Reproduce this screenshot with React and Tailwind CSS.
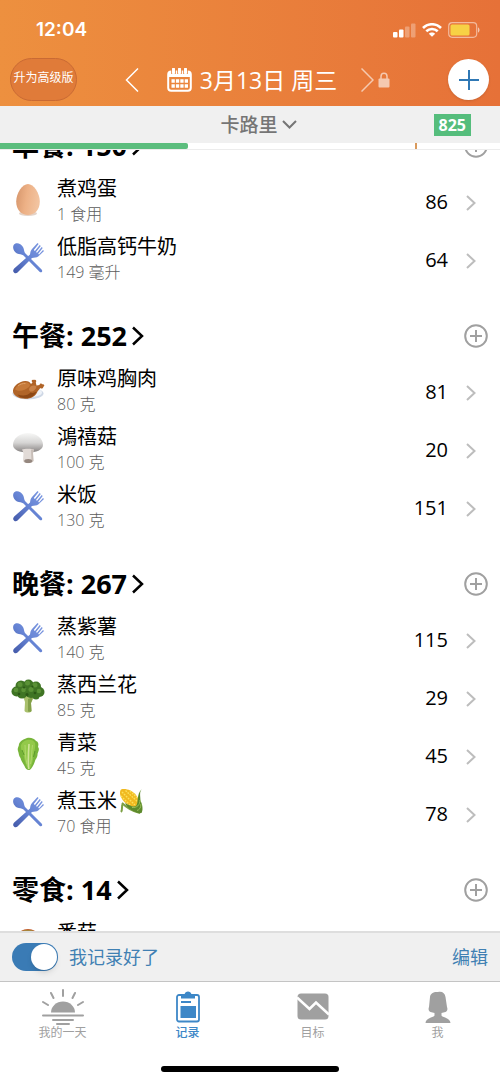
import { useLayoutEffect, useRef, useState } from 'react'

const DAY = {
  date: '3月13日 周三',
  remaining: 825,
  eaten: 37.6,
  marker: 83,
}

const MEALS = [
  {
    name: '早餐',
    total: 150,
    foods: [
      { name: '煮鸡蛋', amount: '1 食用', kcal: 86, icon: 'egg' },
      { name: '低脂高钙牛奶', amount: '149 毫升', kcal: 64, icon: 'cutlery' },
    ],
  },
  {
    name: '午餐',
    total: 252,
    foods: [
      { name: '原味鸡胸肉', amount: '80 克', kcal: 81, icon: 'chicken' },
      { name: '鴻禧菇', amount: '100 克', kcal: 20, icon: 'mushroom' },
      { name: '米饭', amount: '130 克', kcal: 151, icon: 'cutlery' },
    ],
  },
  {
    name: '晚餐',
    total: 267,
    foods: [
      { name: '蒸紫薯', amount: '140 克', kcal: 115, icon: 'cutlery' },
      { name: '蒸西兰花', amount: '85 克', kcal: 29, icon: 'broccoli' },
      { name: '青菜', amount: '45 克', kcal: 45, icon: 'lettuce' },
      { name: '煮玉米', amount: '70 食用', kcal: 78, icon: 'cutlery', corn: true },
    ],
  },
  {
    name: '零食',
    total: 14,
    foods: [{ name: '番茄', icon: 'tomato' }],
  },
]

const Egg = () => (
  <svg viewBox="0 0 32 32" className="size-8">
    <defs>
      <linearGradient id="egg" x1="0" x2="1" y1="0" y2="0.2">
        <stop offset="0" stopColor="#d5946a" />
        <stop offset="0.5" stopColor="#edb186" />
        <stop offset="1" stopColor="#f2c39f" />
      </linearGradient>
    </defs>
    <ellipse cx="16" cy="29.500" rx="9" ry="2.500" fill="#e4d3c8" />
    <path d="M16 0C21.500 0 27.800 9 27.800 17.500C27.800 26 22.500 31 16 31S4.200 26 4.200 17.500C4.200 9 10.500 0 16 0Z" fill="url(#egg)" />
  </svg>
)

const Cutlery = () => (
  <svg viewBox="0 0 32 32" className="size-8">
    <defs>
      <linearGradient id="steel" x1="0" x2="1" y1="1" y2="0">
        <stop offset="0" stopColor="#4258a8" />
        <stop offset="0.5" stopColor="#6684d4" />
        <stop offset="1" stopColor="#7d99e2" />
      </linearGradient>
    </defs>
    <g fill="url(#steel)">
      <path d="M2 2.500C4.500 0 9 1.500 11 5C12.300 7.500 12 9.500 13 11L29.800 27.800C31 29.500 29.500 31 27.800 30L11.500 13.500C9.500 12 7.500 12.500 5 11.500C1.500 9.500 0 5 2 2.500Z" />
      <path d="M2.200 30.700C.6 29.500 1 28 2.200 26.600L18 12.500C18.500 10.500 18.200 9 20 7L25.500 1L26.600 2L21.800 8L22.900 8.900L27.700 3L28.800 3.900L24 9.900L25 10.800L29.700 5L30.700 6L26.200 11.800L27 12.500L31 8L32 8.900L26.500 14.300C24.500 16 22 15.300 20 16L5.500 30.500C4.500 31.500 3 31.500 2.200 30.700Z" />
    </g>
  </svg>
)

const Chicken = () => (
  <svg viewBox="0 0 34 32" className="h-8 w-[34px]">
    <ellipse cx="17" cy="19.500" rx="15.500" ry="6" fill="#cfd8e6" />
    <ellipse cx="16.500" cy="18.500" rx="14.500" ry="5" fill="#eef2f8" />
    <path d="M20 10L21.500 8.500C19.500 6.500 21.500 5 23 6C24.800 5 26 7 24.800 8.500L25.500 11.500L28.500 11C29 9 30.800 9.200 31.200 10.200C33.500 9.800 34 12 32.300 12.800C32.300 14.800 30.300 15 29.300 14L26.500 17.500C25 22 20 25 14 24.800C7 24.800 1.500 21 2 16.500C2.500 11.500 8.500 7.500 14 7C17 6.800 19 8 20 10Z" fill="#b06428" />
    <path d="M4 15.500C6 10.500 11 8 15 8.200C18.500 8.600 20 11 18 13C14 16.500 8 18 4 15.500Z" fill="#c67a3a" />
    <path d="M6.500 20.500C12 22.500 17 21.500 19.500 18.500C21.500 19.500 24 18.500 25.500 17.500C23.500 22.500 18.500 24.500 14 24.200C10.500 24 8 22.800 6.500 20.500Z" fill="#8d4815" />
    <path d="M18 15.500C18.500 12 22.500 10.500 25.500 12.500C25 15.500 22 18 19 17.500Z" fill="#c98248" />
    <path d="M7 12C9 10 12 9.300 14.500 9.600" stroke="#dfa066" fill="none" />
  </svg>
)

const Mushroom = () => (
  <svg viewBox="0 0 32 32" className="size-8">
    <defs>
      <linearGradient id="cap" x1="0" x2="0" y1="0" y2="1">
        <stop offset="0" stopColor="#f8f8f7" />
        <stop offset="0.5" stopColor="#d6d5d4" />
        <stop offset="1" stopColor="#858180" />
      </linearGradient>
    </defs>
    <path d="M1 13C1 6 8 1 16 1S31 6 31 13C31 18 24 20.500 16 20.500S1 18 1 13Z" fill="url(#cap)" />
    <path d="M10 17.500C12 16.500 20 16.500 22 17.500L21 21L21.500 29C20 32 12 32 11 29L11.500 21Z" fill="#e2dbd7" />
    <path d="M19 17.500H22L21 21L21.500 29L19.500 30.500Z" fill="#c8beb8" />
    <ellipse cx="16.200" cy="29" rx="4" ry="2" fill="#95877f" />
  </svg>
)

const Broccoli = () => (
  <svg viewBox="0 0 34 34" className="size-[34px]">
    <path d="M7 16L12 17L14 23L13.500 32C15 34 19.500 34 20.500 32L20 24L23 18L28 16Z" fill="#a9c06c" />
    <path d="M17 20L17 32.500C19 33 20 33 20.500 32L20 24L22 18Z" fill="#83a04a" />
    <g fill="#3f7424">
      <circle cx="5.500" cy="12.500" r="5" />
      <circle cx="10" cy="7" r="5.500" />
      <circle cx="17.500" cy="5.500" r="5" />
      <circle cx="25" cy="7.500" r="5" />
      <circle cx="28.500" cy="13" r="5" />
      <circle cx="20" cy="13" r="6" />
      <circle cx="11" cy="14" r="5.500" />
      <circle cx="25" cy="17" r="3.500" />
    </g>
    <g fill="#5a9136">
      <circle cx="9" cy="5.500" r="2.500" />
      <circle cx="16.500" cy="4" r="2.500" />
      <circle cx="24" cy="6" r="2.500" />
      <circle cx="5" cy="11" r="2.300" />
      <circle cx="12.500" cy="11" r="2.300" />
      <circle cx="20" cy="10.500" r="2.500" />
      <circle cx="28" cy="12" r="2.300" />
    </g>
    <g fill="#2b5716">
      <circle cx="13" cy="8.500" r="1" />
      <circle cx="8" cy="15" r="1.300" />
      <circle cx="16" cy="15.500" r="1.500" />
      <circle cx="24" cy="14" r="1.300" />
      <circle cx="21.500" cy="7.500" r="1" />
    </g>
  </svg>
)

const Lettuce = () => (
  <svg viewBox="0 0 32 34" className="h-[34px] w-8">
    <path d="M15 1C18 0 23 1.500 24 4C27 5 26.500 8 26 10C28 12 26 15 25.500 17C26 20 23.500 22 23 24C22 27 20 32 17.500 33C15.500 33.500 13.500 32 12.500 29C11 26 9 24 8.500 21C6.500 19 7 16 6 14C5 11 7 9.500 7 7C8 4 12 2 15 1Z" fill="#78b53a" />
    <path d="M15 3C18 2 22 3 23 6C24 10 22 14 21.500 19C21 25 19 30 17.500 32C14 30 13 25 12 20C11 15 8 12 9 8C10 5 13 3.500 15 3Z" fill="#93c94a" />
    <path d="M17 7C16.500 14 16 24 16.700 32" stroke="#cfe597" strokeWidth="1.600" fill="none" />
    <path d="M13 8C13.500 14 13 20 15 27M20.500 8C19.500 14 20 20 18.500 27" stroke="#b3d970" strokeWidth="0.900" fill="none" />
    <path d="M10 13L12 18M23 14L21.500 20" stroke="#5c9a2c" strokeWidth="1" fill="none" />
  </svg>
)

const Tomato = () => (
  <svg viewBox="0 0 32 32" className="size-8">
    <ellipse cx="16" cy="16" rx="14" ry="15" fill="#c9572c" />
    <path d="M5 7C8 0 24 0 27 7C22 9 10 9 5 7Z" fill="#a8853c" />
  </svg>
)

const Corn = () => (
  <svg viewBox="0 0 24 26" className="ml-0.5 h-[26px] w-6">
    <path d="M4 15C2 18 4 22 2 24M3 15C8 20 12 23 21 25" stroke="#7da044" strokeWidth="2" fill="none" />
    <path d="M2 1.500C6 0 13 2 17 7C20 11 20.500 16 18 18.500C14 20 8 17 4.500 13C1 9 0 4 2 1.500Z" fill="#f0b91f" />
    <path d="M3 4L16 17M6.500 2.500L19 14M2 8L12 18M11 3L19.500 11" stroke="#fbe05a" strokeWidth="1.400" strokeDasharray="1.800 1" fill="none" />
    <path d="M23 1C20 4 21.500 8 21.500 13C24 17 24 23 22.500 25C18 26 8 21 6 15C10 17 14 19.500 17 18C20 15 17 6 23 1Z" fill="#5d8a2c" />
    <path d="M21 12C21 17 18 20 13 19.500M22 16C22 20 20 22 18 22.500" stroke="#9cc25a" fill="none" />
  </svg>
)

const FOOD_ICONS = {
  egg: Egg,
  cutlery: Cutlery,
  chicken: Chicken,
  mushroom: Mushroom,
  broccoli: Broccoli,
  lettuce: Lettuce,
  tomato: Tomato,
}

const StatusBar = () => (
  <div className="flex items-center justify-between pt-4 pr-5 pl-9">
    <span className="font-['Inter',sans-serif] text-[19px] leading-7 font-semibold">12:04</span>
    <div className="flex items-center gap-1.5">
      <svg viewBox="0 0 23 15" className="h-[15px] w-[23px]" fill="#fff">
        <rect x="0" y="9" width="4.500" height="5.500" rx="1" />
        <rect x="6" y="6.500" width="4.500" height="8" rx="1" />
        <rect x="12" y="3.500" width="4.500" height="11" rx="1" opacity="0.3" />
        <rect x="18" y="0.500" width="4.500" height="14" rx="1" opacity="0.3" />
      </svg>
      <svg viewBox="0 0 20 14" className="h-3.5 w-5" fill="none" stroke="#fff" strokeWidth="2.600">
        <path d="M1 5C6 0 14 0 19 5" />
        <path d="M4.300 8.300C7.500 5.200 12.500 5.200 15.700 8.300" />
        <path d="M10 13.800L6.800 10.700C8.500 9 11.500 9 13.200 10.700Z" fill="#fff" stroke="none" />
      </svg>
      <svg viewBox="0 0 32 16" className="h-4 w-8">
        <rect x="0.700" y="0.700" width="28" height="14.600" rx="3.500" fill="none" stroke="#fff" strokeWidth="1.200" opacity="0.5" />
        <rect x="2.500" y="2.500" width="19" height="11" rx="1.500" fill="#f7d145" />
        <path d="M30 5.500C32 6 32 10 30 10.500Z" fill="#fff" opacity="0.6" />
      </svg>
    </div>
  </div>
)

const Header = () => (
  <header className="h-[106px] shrink-0 bg-linear-to-r from-[#ed903f] to-[#e67138] text-white">
    <StatusBar />
    <div className="flex items-center pt-3.5 pr-[11px] pl-2.5">
      <button className="h-[43px] w-[67px] shrink-0 rounded-full border border-[#c96a34] bg-[#e07b39] pb-1 text-xs whitespace-nowrap">
        升为高级版
      </button>
      <div className="flex flex-1 items-center justify-center pr-2.5">
        <button aria-label="前一天" className="mr-7">
          <svg viewBox="0 0 14 24" className="h-6 w-3.5" fill="none" stroke="#fff" strokeWidth="1.500">
            <path d="M13 0.500L1.500 12L13 23.500" />
          </svg>
        </button>
        <button className="flex items-center gap-2 text-[23px] leading-8 whitespace-nowrap">
          <svg viewBox="0 0 25 24" className="h-6 w-[25px]">
            <rect x="1.200" y="3.500" width="22.600" height="19.300" rx="3" fill="none" stroke="#fff" strokeWidth="2" />
            <path d="M1 4H24V9H1Z" fill="#fff" />
            <path d="M6.500 0.500V6M12.500 0.500V6M18.500 0.500V6" stroke="#e8833b" strokeWidth="4.500" />
            <path d="M6.500 1V5M12.500 1V5M18.500 1V5" stroke="#fff" strokeWidth="3" strokeLinecap="round" />
            <path d="M4.500 13H21M4.500 18H21" stroke="#fff" strokeWidth="3.300" strokeDasharray="3.300 1.100" />
          </svg>
          <span>{DAY.date}</span>
        </button>
        <button aria-label="后一天" className="ml-6 flex items-center gap-1 opacity-60">
          <svg viewBox="0 0 13 24" className="h-6 w-[13px]" fill="none" stroke="#fff" strokeWidth="1.500">
            <path d="M0.500 0.500L12 12L0.500 23.500" />
          </svg>
          <svg viewBox="0 0 12 16" className="h-4 w-3">
            <rect x="0.500" y="6.500" width="11" height="9" rx="1" fill="#fff" />
            <path d="M3 7V4.500C3 0.200 9 0.200 9 4.500V7" fill="none" stroke="#fff" strokeWidth="1.500" />
          </svg>
        </button>
      </div>
      <button aria-label="添加" className="flex size-[41px] shrink-0 items-center justify-center rounded-full bg-white shadow-sm">
        <svg viewBox="0 0 20 20" className="size-5" stroke="#2f78b5" strokeWidth="2">
          <path d="M10 0V20M0 10H20" />
        </svg>
      </button>
    </div>
  </header>
)

const CalorieBar = () => (
  <div className="shrink-0 border-b border-[#ececec]">
    <div className="grid h-[37px] grid-cols-[1fr_auto_1fr] items-center bg-[#f0f0f0] pr-[29px] pl-10">
      <button className="col-start-2 ml-1.5 flex items-center gap-1 text-[19px] leading-7 font-medium text-[#757575]">
        卡路里
        <svg viewBox="0 0 15 9" className="h-[9px] w-[15px]" fill="none" stroke="#757575" strokeWidth="2">
          <path d="M1 1L7.500 7.500L14 1" />
        </svg>
      </button>
      <span className="justify-self-end bg-[#55bd7c] px-[5px] font-['Open_Sans',sans-serif] text-base leading-[22px] font-bold text-white">
        {DAY.remaining}
      </span>
    </div>
    <div className="relative h-1.5 bg-white">
      <div className="h-full rounded-r-xs bg-[#5bbd7d]" style={{ width: `${DAY.eaten}%` }} />
      <div className="absolute inset-y-0 w-0.5 bg-[#d99a5c]" style={{ left: `${DAY.marker}%` }} />
    </div>
  </div>
)

const FoodRow = ({ food }) => {
  const Icon = FOOD_ICONS[food.icon]
  return (
    <li>
      <a href="#food" className="flex h-[58px] items-center pr-6 pl-[11px]">
        <span className="mr-3 flex w-[34px] shrink-0 justify-center pb-1">
          <Icon />
        </span>
        <span className="flex min-w-0 flex-1 flex-col pb-1">
          <span className="flex items-center text-xl leading-7 text-black">
            {food.name}
            {food.corn && <Corn />}
          </span>
          <span className="h-[22px] text-base leading-[22px] font-light text-[#5c5c5c]">{food.amount}</span>
        </span>
        <span className="mr-[18px] text-xl leading-7 text-black">{food.kcal}</span>
        <svg viewBox="0 0 10 16" className="mt-0.5 h-4 w-2.5" fill="none" stroke="#bdbdbd" strokeWidth="2">
          <path d="M1 1L8.500 8L1 15" />
        </svg>
      </a>
    </li>
  )
}

const Meal = ({ meal }) => (
  <section className="pt-5">
    <div className="flex h-[54px] items-center justify-between px-3">
      <h2>
        <button className="flex items-center gap-1 text-[27px] leading-9 font-bold text-black">
          {meal.name}: {meal.total}
          <svg viewBox="0 0 13 20" className="h-5 w-[13px]" fill="none" stroke="#000" strokeWidth="2.500">
            <path d="M2 1.500L11 10L2 18.500" />
          </svg>
        </button>
      </h2>
      <button aria-label={`添加${meal.name}`}>
        <svg viewBox="0 0 24 24" className="size-6" fill="none" stroke="#a0a0a0" strokeWidth="2">
          <circle cx="12" cy="12" r="10.800" />
          <path d="M12 6V18M6 12H18" />
        </svg>
      </button>
    </div>
    <ul>
      {meal.foods.map((food) => (
        <FoodRow key={food.name} food={food} />
      ))}
    </ul>
  </section>
)

const SunIcon = () => (
  <svg viewBox="0 0 42 36" className="h-9 w-[42px]" fill="none" stroke="currentColor" strokeWidth="2" strokeLinecap="round">
    <path d="M9 23.500A12 11 0 0 1 33 23.500Z" fill="currentColor" stroke="none" />
    <path d="M21 1V7M9 4L11.500 9M33 4L30.500 9M1 13L6 16M41 13L36 16" />
    <path d="M1 26.500H41M11 31H31M15 35H27" />
  </svg>
)

const ClipboardIcon = () => (
  <svg viewBox="0 0 24 32" className="h-8 w-6" fill="none" stroke="currentColor">
    <rect x="1" y="4" width="22" height="26.500" rx="2" strokeWidth="1.800" />
    <path d="M5 7.500V3.500H8.500C9 -0.500 15 -0.500 15.500 3.500H19V7.500Z" fill="currentColor" stroke="none" />
    <path d="M5 11H15" strokeWidth="2" />
    <rect x="4.500" y="15" width="15.500" height="12" fill="currentColor" stroke="none" />
  </svg>
)

const GoalIcon = () => (
  <svg viewBox="0 0 32 27" className="h-[27px] w-8">
    <rect x="0.500" y="0.500" width="31" height="26" rx="3.500" fill="currentColor" />
    <path d="M0 4.500L12.500 16L19 9.500L32 21.500" fill="none" stroke="#fff" strokeWidth="2.600" />
  </svg>
)

const ProfileIcon = () => (
  <svg viewBox="0 0 26 32" className="h-8 w-[26px]" fill="currentColor">
    <path d="M13 1C17 0 20 2 20.500 6L22 16C22.800 18 22.500 20 20.500 21L16.500 22V24.500C17 26.500 25 26.500 25.500 32H0.500C1 26.500 9 26.500 9.500 24.500V22L5.500 21C3.500 20 3.200 18 4 16L5 6C5.500 2 9 0.500 13 1Z" />
  </svg>
)

const TABS = [
  { label: '我的一天', icon: SunIcon },
  { label: '记录', icon: ClipboardIcon },
  { label: '目标', icon: GoalIcon },
  { label: '我', icon: ProfileIcon },
]

const TabBar = () => {
  const [active, setActive] = useState('记录')

  return (
    <nav className="h-[100px] shrink-0 bg-white">
      <div className="grid grid-cols-4 pt-1.5">
        {TABS.map(({ label, icon: Icon }) => (
          <button
            key={label}
            onClick={() => setActive(label)}
            className={`flex flex-col items-center text-xs leading-4 ${active === label ? 'font-medium text-[#3d87c7]' : 'text-[#a0a0a0]'}`}
          >
            <span className="flex h-[37px] items-center justify-center">
              <Icon />
            </span>
            {label}
          </button>
        ))}
      </div>
      <div className="mx-auto mt-[25px] h-1.5 w-[178px] rounded-full bg-black" />
    </nav>
  )
}

const App = () => {
  const listRef = useRef(null)
  const [done, setDone] = useState(true)

  // open the diary a little way down the breakfast section
  useLayoutEffect(() => {
    listRef.current.scrollTop = 51
  }, [])

  return (
    <div className="flex h-screen flex-col overflow-hidden bg-white font-['Open_Sans','Noto_Sans_CJK_SC',sans-serif]">
      <Header />
      <CalorieBar />
      <main ref={listRef} className="min-h-0 flex-1 overflow-y-auto [scrollbar-width:none]">
        {MEALS.map((meal) => (
          <Meal key={meal.name} meal={meal} />
        ))}
      </main>
      <div className="flex h-[51px] shrink-0 items-center justify-between border-t-2 border-b border-t-[#dedede] border-b-[#c4c4c4] bg-[#f0f0f0] px-3 text-lg leading-7 text-[#4080b3]">
        <label className="flex items-center gap-[11px]">
          <input
            type="checkbox"
            role="switch"
            checked={done}
            onChange={(e) => setDone(e.target.checked)}
            className="flex h-7 w-[46px] appearance-none items-center rounded-full bg-[#bdbdbd] px-px before:size-[26px] before:rounded-full before:bg-white before:shadow-md checked:justify-end checked:bg-[#3a7bb5]"
          />
          我记录好了
        </label>
        <button>编辑</button>
      </div>
      <TabBar />
    </div>
  )
}

export default App
